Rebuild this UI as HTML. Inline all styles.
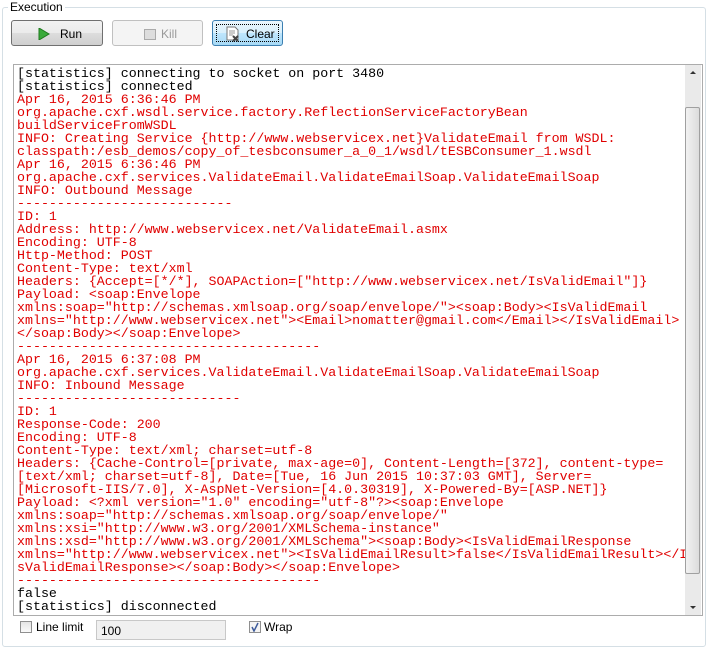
<!DOCTYPE html>
<html><head><style>
body{margin:0;width:707px;height:649px;background:#fff;font-family:"Liberation Sans",sans-serif;font-size:12px;position:relative;overflow:hidden}
.grp{position:absolute;left:2px;top:7px;width:702px;height:638px;border:1px solid #d5dfe5;border-radius:3px}
.legend{position:absolute;left:8px;top:0px;background:#fff;padding:0 2px;font-size:12px;color:#000}
.btn{position:absolute;top:20px;height:26px;border:1px solid #707070;border-radius:3px;background:linear-gradient(#f2f2f2,#ebebeb 50%,#dddddd 51%,#cfcfcf);font-size:12px;line-height:26px;box-sizing:border-box}
.ta{position:absolute;left:13px;top:64px;width:690px;height:552px;border:1px solid #acacac;box-sizing:border-box;background:#fff;overflow:hidden}
pre{margin:0;position:absolute;left:3px;top:2px;font-family:"Liberation Mono","Courier New",monospace;font-size:13.3px;line-height:13px;color:#000}
.r{color:#e00000}
.sb{position:absolute;right:1px;top:0;width:16px;height:550px;background:#eaeaea}
.thumb{position:absolute;left:0;top:42px;width:15px;height:467px;border:1px solid #a0a0a0;border-radius:2px;box-sizing:border-box;background:linear-gradient(90deg,#f2f2f2,#dcdcdc)}
</style></head><body>
<div class="grp"></div>
<div class="legend">Execution</div>
<div class="btn" style="left:11px;width:92px;">
<svg style="position:absolute;left:26px;top:7px" width="12" height="12"><path d="M1 0 L11 6 L1 12 Z" fill="#3aaa3a" stroke="#1f7a1f"/></svg>
<span style="position:absolute;left:48px">Run</span></div>
<div class="btn" style="left:112px;width:91px;border-color:#c0c0c0;background:#f4f4f4;color:#9a9a9a">
<span style="position:absolute;left:31px;top:8px;width:10px;height:9px;border:1px solid #aaa;background:#ddd"></span>
<span style="position:absolute;left:48px">Kill</span></div>
<div class="btn" style="left:212px;width:71px;border-color:#3c7fb1;background:linear-gradient(#eaf6fd,#d9f0fc 50%,#bee6fd 51%,#a7d9f5)">
<span style="position:absolute;left:3px;top:3px;right:3px;bottom:3px;border:1px dotted #000"></span>
<svg style="position:absolute;left:13px;top:5px" width="14" height="16"><path d="M1 1h8l3 3v10H1z" fill="#fff" stroke="#777"/><path d="M3 5h6M3 7h6M3 9h4" stroke="#999"/><path d="M7 10l5 5M12 10l-5 5" stroke="#444" stroke-width="2"/></svg>
<span style="position:absolute;left:33px">Clear</span></div>
<div class="ta"><pre>[statistics] connecting to socket on port 3480
[statistics] connected
<span class="r">Apr 16, 2015 6:36:46 PM
org.apache.cxf.wsdl.service.factory.ReflectionServiceFactoryBean
buildServiceFromWSDL
INFO: Creating Service {http://www.webservicex.net}ValidateEmail from WSDL:
classpath:/esb_demos/copy_of_tesbconsumer_a_0_1/wsdl/tESBConsumer_1.wsdl
Apr 16, 2015 6:36:46 PM
org.apache.cxf.services.ValidateEmail.ValidateEmailSoap.ValidateEmailSoap
INFO: Outbound Message
---------------------------
ID: 1
Address: http://www.webservicex.net/ValidateEmail.asmx
Encoding: UTF-8
Http-Method: POST
Content-Type: text/xml
Headers: {Accept=[*/*], SOAPAction=["http://www.webservicex.net/IsValidEmail"]}
Payload: &lt;soap:Envelope
xmlns:soap="http://schemas.xmlsoap.org/soap/envelope/"&gt;&lt;soap:Body&gt;&lt;IsValidEmail
xmlns="http://www.webservicex.net"&gt;&lt;Email&gt;nomatter@gmail.com&lt;/Email&gt;&lt;/IsValidEmail&gt;
&lt;/soap:Body&gt;&lt;/soap:Envelope&gt;
--------------------------------------
Apr 16, 2015 6:37:08 PM
org.apache.cxf.services.ValidateEmail.ValidateEmailSoap.ValidateEmailSoap
INFO: Inbound Message
----------------------------
ID: 1
Response-Code: 200
Encoding: UTF-8
Content-Type: text/xml; charset=utf-8
Headers: {Cache-Control=[private, max-age=0], Content-Length=[372], content-type=
[text/xml; charset=utf-8], Date=[Tue, 16 Jun 2015 10:37:03 GMT], Server=
[Microsoft-IIS/7.0], X-AspNet-Version=[4.0.30319], X-Powered-By=[ASP.NET]}
Payload: &lt;?xml version="1.0" encoding="utf-8"?&gt;&lt;soap:Envelope
xmlns:soap="http://schemas.xmlsoap.org/soap/envelope/"
xmlns:xsi="http://www.w3.org/2001/XMLSchema-instance"
xmlns:xsd="http://www.w3.org/2001/XMLSchema"&gt;&lt;soap:Body&gt;&lt;IsValidEmailResponse
xmlns="http://www.webservicex.net"&gt;&lt;IsValidEmailResult&gt;false&lt;/IsValidEmailResult&gt;&lt;/I
sValidEmailResponse&gt;&lt;/soap:Body&gt;&lt;/soap:Envelope&gt;
--------------------------------------</span>
false
[statistics] disconnected</pre>
<div class="sb"><div style="position:absolute;left:5px;top:6px;border:3px solid transparent;border-bottom:3px solid #333;border-top:0"></div><div class="thumb"></div><div style="position:absolute;left:5px;bottom:6px;border:3px solid transparent;border-top:3px solid #333;border-bottom:0"></div></div>
</div>
<div style="position:absolute;left:20px;top:621px;width:12px;height:12px;border:1px solid #8f8f8f;background:linear-gradient(#e4e4e4,#fafafa);box-sizing:border-box"></div>
<div style="position:absolute;left:36px;top:620px;">Line limit</div>
<div style="position:absolute;left:96px;top:620px;width:130px;height:20px;border:1px solid #c8c8c8;background:#f0f0f0;box-sizing:border-box;padding:3px 0 0 4px">100</div>
<div style="position:absolute;left:249px;top:621px;width:12px;height:12px;border:1px solid #8f8f8f;background:#f4f4f4;box-sizing:border-box"><svg width="10" height="10" style="position:absolute;left:0;top:0"><path d="M2 5l2 4 4-8" stroke="#3c5a9a" stroke-width="1.5" fill="none"/></svg></div>
<div style="position:absolute;left:264px;top:620px;">Wrap</div>
</body></html>
